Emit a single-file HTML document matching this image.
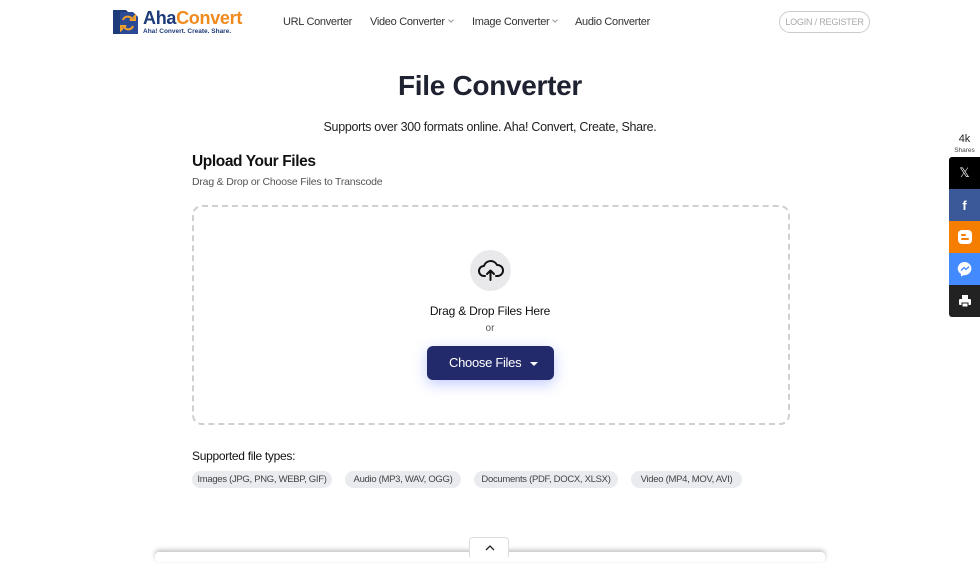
<!DOCTYPE html>
<html><head><meta charset="utf-8"><style>
*{box-sizing:border-box;margin:0;padding:0}
body{width:980px;height:557px;overflow:hidden;background:#fff;font-family:"Liberation Sans",sans-serif;color:#222;position:relative}
.nav{position:absolute;top:0;left:0;width:980px;height:44px}
.nav a{position:absolute;top:16px;font-size:11px;color:#333;letter-spacing:-0.3px}
.caret{display:inline-block;width:4px;height:4px;border-right:1px solid #999;border-bottom:1px solid #999;transform:rotate(45deg);margin-left:4px;position:relative;top:-3px}
.login{position:absolute;left:779px;top:11px;width:91px;height:22px;border:1px solid #ccc;border-radius:11px;font-size:9px;color:#aaa;text-align:center;line-height:20px;letter-spacing:-0.2px}
h1{position:absolute;top:70px;left:0;width:980px;text-align:center;font-size:28px;font-weight:bold;color:#1f2230;letter-spacing:-0.3px}
.sub{position:absolute;top:120px;width:980px;text-align:center;font-size:12.5px;color:#222;letter-spacing:-0.3px}
.h2{position:absolute;left:192px;top:153px;font-size:15.5px;font-weight:bold;color:#111;letter-spacing:-0.4px}
.h2s{position:absolute;left:192px;top:176px;font-size:10.5px;color:#555;letter-spacing:-0.2px}
.drop{position:absolute;left:192px;top:205px;width:598px;height:220px;border:2px dashed #d0d0d0;border-radius:10px}
.circ{position:absolute;left:470px;top:250px;width:41px;height:41px;border-radius:50%;background:#e9e9ec}
.dd{position:absolute;top:304px;width:980px;text-align:center;font-size:12px;color:#111;letter-spacing:-0.2px}
.or{position:absolute;top:323px;width:980px;text-align:center;font-size:10px;color:#555}
.btn{position:absolute;left:427px;top:346px;width:127px;height:34px;border-radius:6px;background:#232a6b;color:#fff;font-size:13px;line-height:34px;padding-left:22px;box-shadow:0 4px 14px rgba(80,110,255,.35);letter-spacing:-0.3px}
.btn:after{content:"";position:absolute;left:103px;top:16px;border:4px solid transparent;border-top:4px solid #fff;border-bottom:0}
.st{position:absolute;left:192px;top:449px;font-size:12px;color:#111;letter-spacing:-0.3px}
.chip{position:absolute;top:471px;height:17px;border-radius:9px;background:#e9ebef;font-size:9.5px;color:#444;line-height:17px;text-align:center;letter-spacing:-0.3px}
.share{position:absolute;left:949px;top:157px;width:31px}
.share div{height:32px;display:flex;align-items:center;justify-content:center}
.cnt{position:absolute;left:949px;top:134px;width:31px;text-align:center;font-size:11px;color:#222;line-height:11px}
.cnt small{display:block;font-size:6.5px;color:#444}
.bar{position:absolute;left:155px;top:552px;width:670px;height:10px;background:#fff;box-shadow:0 -2px 5px rgba(0,0,0,.25);border-radius:4px}
.tab{position:absolute;left:469px;top:537px;width:40px;height:20px;background:#fff;border:1px solid #ddd;border-bottom:0;border-radius:4px 4px 0 0}
</style></head><body>
<div class="nav">
<svg style="position:absolute;left:111px;top:8px" width="30" height="28" viewBox="0 0 30 28"><path d="M2 2h13l5 5v19H2z" fill="#1d3a7a"/><path d="M9 4h13l5 5v17H9z" fill="#2a4a96"/><path d="M12 12a5 5 0 0 1 9-1l-2 1h5v-4l-2 2" fill="none" stroke="#f2a22c" stroke-width="2"/><path d="M22 18a5 5 0 0 1-9 1l2-1h-5v4l2-2" fill="none" stroke="#f2a22c" stroke-width="2"/></svg>
<div style="position:absolute;left:143px;top:8px;font-size:18px;font-weight:bold;letter-spacing:-0.3px"><span style="color:#1d3a7a">Aha</span><span style="color:#f08a1c">Convert</span></div>
<div style="position:absolute;left:143px;top:28px;font-size:6.5px;font-weight:bold;color:#1d3a7a">Aha! Convert. Create. Share.</div>
<a style="left:283px">URL Converter</a>
<a style="left:370px">Video Converter<span class="caret"></span></a>
<a style="left:472px">Image Converter<span class="caret"></span></a>
<a style="left:575px">Audio Converter</a>
<div class="login">LOGIN / REGISTER</div>
</div>
<h1>File Converter</h1>
<div class="sub">Supports over 300 formats online. Aha! Convert, Create, Share.</div>
<div class="h2">Upload Your Files</div>
<div class="h2s">Drag &amp; Drop or Choose Files to Transcode</div>
<div class="drop"></div>
<div class="circ"><svg width="41" height="41" viewBox="0 0 41 41"><path d="M15 26h-1a5 5 0 0 1 0-10 7 7 0 0 1 13-1 5 5 0 0 1 1 11h-2" fill="none" stroke="#111" stroke-width="2" stroke-linecap="round" stroke-linejoin="round"/><path d="M20.5 30v-9M17 24l3.5-3.5L24 24" fill="none" stroke="#111" stroke-width="2" stroke-linecap="round" stroke-linejoin="round"/></svg></div>
<div class="dd">Drag &amp; Drop Files Here</div>
<div class="or">or</div>
<div class="btn">Choose Files</div>
<div class="st">Supported file types:</div>
<div class="chip" style="left:192px;width:140px">Images (JPG, PNG, WEBP, GIF)</div>
<div class="chip" style="left:345px;width:116px">Audio (MP3, WAV, OGG)</div>
<div class="chip" style="left:474px;width:144px">Documents (PDF, DOCX, XLSX)</div>
<div class="chip" style="left:631px;width:111px">Video (MP4, MOV, AVI)</div>
<div class="cnt">4k<small>Shares</small></div>
<div class="share">
<div style="background:#000;border-radius:3px 0 0 0;color:#fff;font-size:13px">𝕏</div>
<div style="background:#3b5998;color:#fff;font-weight:bold;font-size:13px">f</div>
<div style="background:#f57d00"><svg width="16" height="16"><rect x="1" y="1" width="14" height="14" rx="4" fill="#fff"/><rect x="4" y="5" width="5" height="2" rx="1" fill="#f57d00"/><rect x="4" y="9" width="8" height="2" rx="1" fill="#f57d00"/></svg></div>
<div style="background:#448aff"><svg width="16" height="16"><path d="M8 1a7 6.5 0 0 0-4 12l0 2.5 2.5-1.3A7 6.5 0 1 0 8 1z" fill="#fff"/><path d="M4 9.5l3-3 2 2 3-3-3 3-2-2z" stroke="#448aff" stroke-width="1.3" fill="none"/></svg></div>
<div style="background:#222;border-radius:0 0 0 3px"><svg width="14" height="14"><rect x="4" y="1" width="6" height="4" fill="#fff"/><rect x="1" y="5" width="12" height="6" rx="1" fill="#fff"/><rect x="4" y="9" width="6" height="4" fill="#fff" stroke="#222"/></svg></div>
</div>
<div class="bar"></div>
<div class="tab"><svg width="40" height="20"><path d="M16 12l4-4 4 4" fill="none" stroke="#222" stroke-width="1.3"/></svg></div>
</body></html>
